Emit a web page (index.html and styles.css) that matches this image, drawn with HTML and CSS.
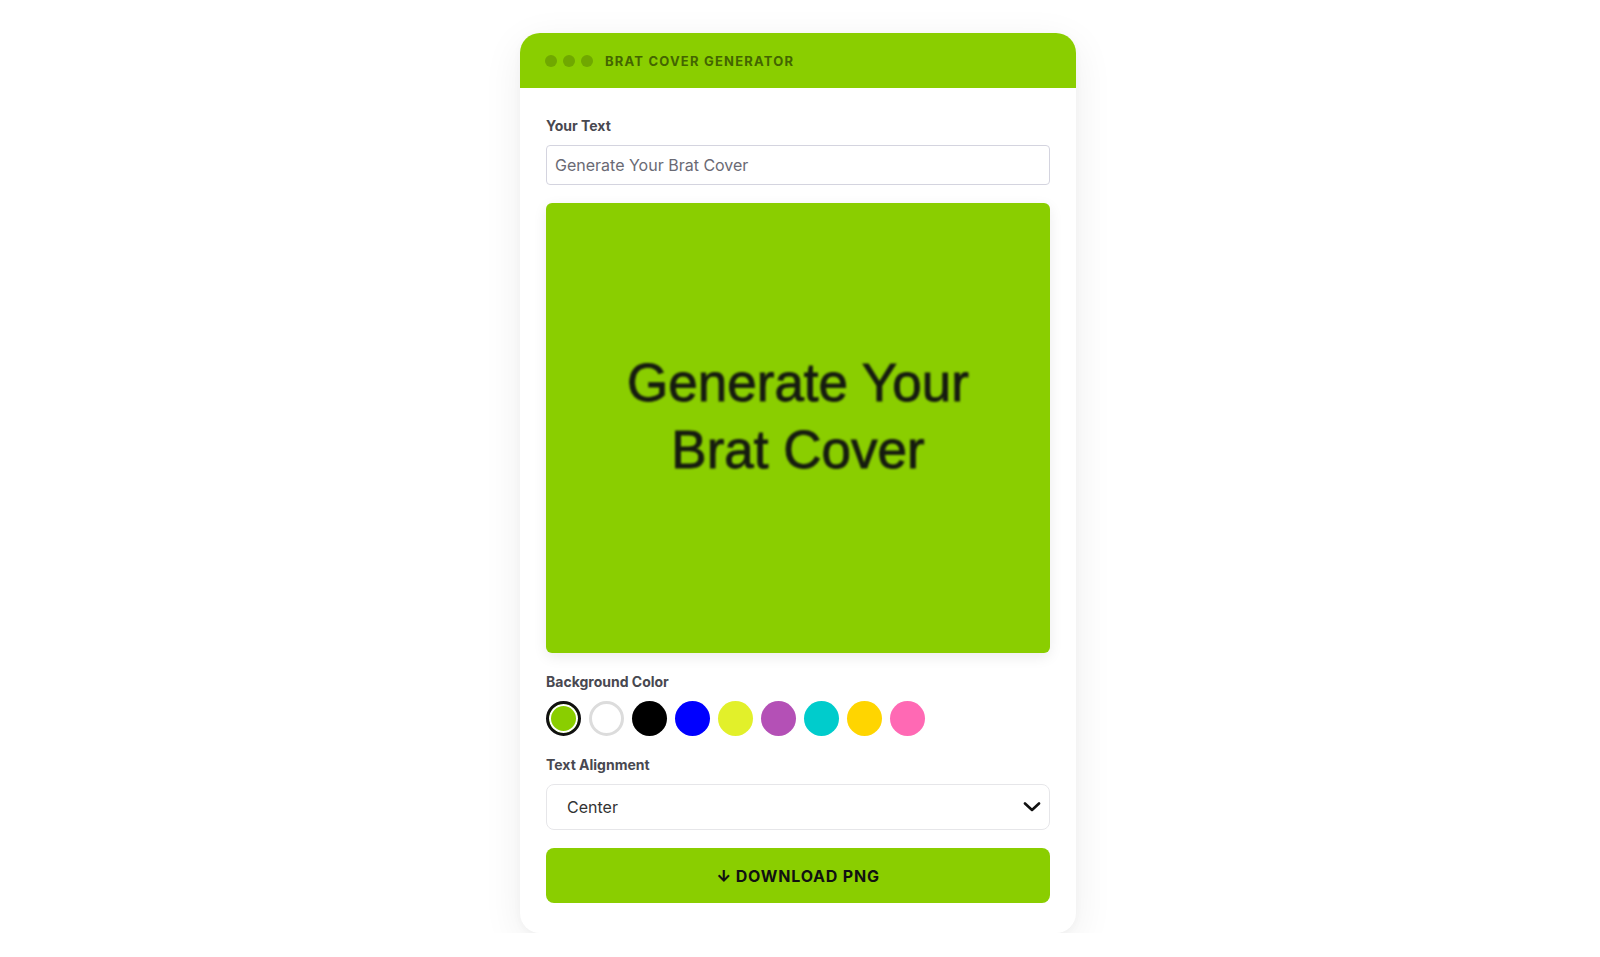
FILE: index.html
```html
<!DOCTYPE html>
<html lang="en">
<head>
<meta charset="utf-8">
<title>Brat Cover Generator</title>
<link rel="stylesheet" href="styles.css">
</head>
<body>
<div class="card">
  <div class="header">
    <span class="dot"></span><span class="dot"></span><span class="dot"></span>
    <span class="title">BRAT COVER GENERATOR</span>
  </div>
  <div class="content">
    <label class="label">Your Text</label>
    <div class="input">Generate Your Brat Cover</div>

    <div class="preview">
      <div class="preview-text">Generate Your<br>Brat Cover</div>
    </div>

    <div class="group">
      <label class="label">Background Color</label>
      <div class="swatches">
        <span class="swatch selected sw-green"></span>
        <span class="swatch sw-white"></span>
        <span class="swatch sw-black"></span>
        <span class="swatch sw-blue"></span>
        <span class="swatch sw-yellow"></span>
        <span class="swatch sw-purple"></span>
        <span class="swatch sw-cyan"></span>
        <span class="swatch sw-gold"></span>
        <span class="swatch sw-pink"></span>
      </div>
    </div>

    <div class="group">
      <label class="label">Text Alignment</label>
      <div class="select">
        <span>Center</span>
        <svg class="chevron" width="18" height="10" viewBox="0 0 18 10"><path d="M2 1.5 L9 8 L16 1.5" fill="none" stroke="#111" stroke-width="2.6" stroke-linecap="round" stroke-linejoin="round"/></svg>
      </div>
    </div>

    <button class="download"><span class="arrow">↓</span> DOWNLOAD PNG</button>
  </div>
</div>
</body>
</html>
```

FILE: styles.css
```css
* { box-sizing: border-box; }

html, body {
  margin: 0;
  padding: 0;
  background: #ffffff;
  font-family: Inter, "Noto Sans", "Liberation Sans", sans-serif;
}

body {
  padding-top: 33px;
}

.card {
  width: 556px;
  margin-left: calc(50% - 280px);
  background: #ffffff;
  border-radius: 20px;
  overflow: hidden;
  box-shadow: 0 10px 40px rgba(0, 0, 0, 0.07), 0 2px 8px rgba(0, 0, 0, 0.03);
}

.header {
  height: 55px;
  background: #8ace00;
  display: flex;
  align-items: center;
  gap: 6px;
  padding: 0 25px;
}

.dot {
  width: 12px;
  height: 12px;
  border-radius: 50%;
  background: #70a800;
}

.title {
  margin-left: 6px;
  font-size: 13px;
  font-weight: 700;
  letter-spacing: 1.2px;
  color: #436500;
}

.content {
  padding: 27px 26px 30px;
  display: flex;
  flex-direction: column;
}

.label {
  display: block;
  font-size: 14px;
  line-height: 21px;
  font-weight: 700;
  color: #484850;
  margin-bottom: 9px;
}

.input {
  height: 40px;
  border: 1px solid #d4d4df;
  border-radius: 4px;
  padding: 0 8px;
  display: flex;
  align-items: center;
  font-size: 16px;
  color: #6a6a74;
}

.preview {
  margin-top: 18px;
  height: 450px;
  background: #8ace00;
  border-radius: 6px;
  box-shadow: 0 4px 14px rgba(0, 0, 0, 0.08);
  display: flex;
  align-items: center;
  justify-content: center;
  padding-bottom: 24px;
}

.preview-text {
  font-family: "Liberation Sans", Arial, sans-serif;
  font-size: 53px;
  line-height: 67px;
  color: #151a10;
  text-align: center;
  -webkit-text-stroke: 0.9px #151a10;
  filter: blur(0.9px);
}

.group {
  margin-top: 18px;
}

.swatches {
  display: flex;
  gap: 8px;
}

.swatch {
  width: 35px;
  height: 35px;
  border-radius: 50%;
  display: block;
}

.swatch.selected {
  border: 3px solid #111111;
  box-shadow: inset 0 0 0 2px #ffffff;
}

.sw-green { background: #8ace00; }
.sw-white { background: #ffffff; border: 3px solid #dcdcdc; }
.sw-black { background: #000000; }
.sw-blue { background: #0000ff; }
.sw-yellow { background: #e2f02a; }
.sw-purple { background: #b450b6; }
.sw-cyan { background: #00cccc; }
.sw-gold { background: #ffd500; }
.sw-pink { background: #ff69b4; }

.select {
  height: 46px;
  border: 1px solid #e6e6e9;
  border-radius: 8px;
  padding: 0 8px 0 20px;
  display: flex;
  align-items: center;
  justify-content: space-between;
  font-size: 16px;
  color: #333333;
}

.chevron {
  display: block;
}

.download {
  margin-top: 18px;
  height: 55px;
  border: none;
  border-radius: 8px;
  background: #8ace00;
  font-family: Inter, "Noto Sans", "Liberation Sans", sans-serif;
  font-size: 16px;
  font-weight: 700;
  letter-spacing: 0.8px;
  color: #111111;
  cursor: pointer;
}

.arrow {
  font-weight: 800;
  letter-spacing: 0;
}
```
